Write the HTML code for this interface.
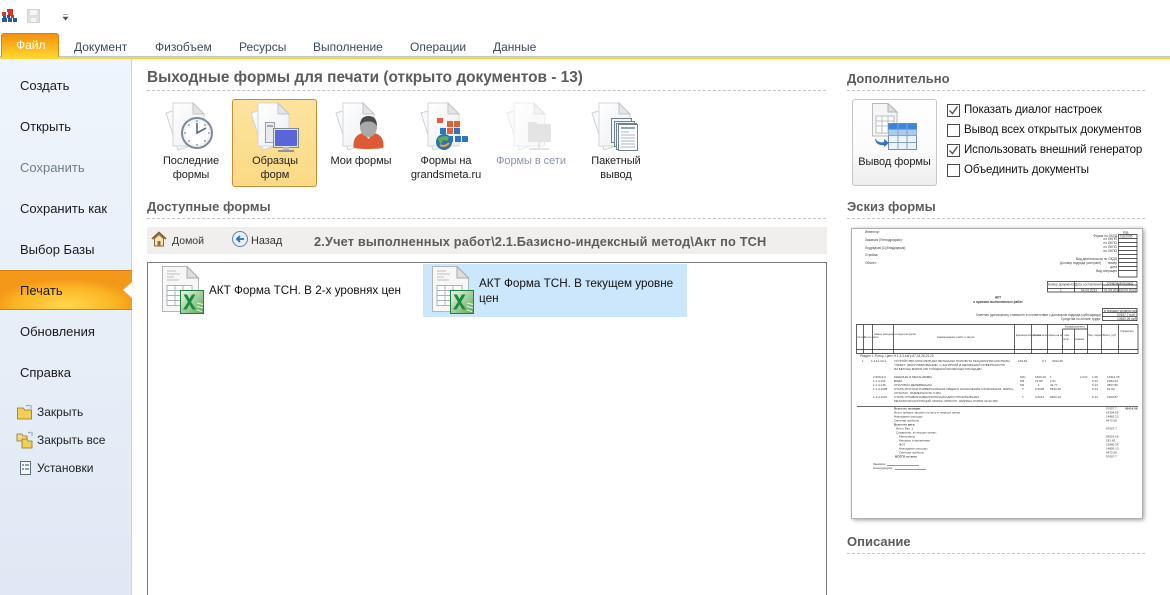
<!DOCTYPE html>
<html lang="ru"><head><meta charset="utf-8"><title>Печать</title>
<style>
html,body{margin:0;padding:0;background:#fff}
#p{position:relative;width:1170px;height:595px;overflow:hidden;background:#fff;font-family:"Liberation Sans","DejaVu Sans",sans-serif;font-size:12px;color:#1e1e1e}
.a,.t{position:absolute;white-space:nowrap}
.tab{top:40px;font-size:12px;color:#3b4a5e}
.nav{left:20px;font-size:13px;color:#1a1a1a}
.sub{left:37px;font-size:12px;color:#222}
.h{font-weight:bold;color:#5c5c5c;font-size:13px}
.dash{position:absolute;height:0;border-top:1px dashed #c4c4c4}
.lbl{position:absolute;text-align:center;font-size:11px;letter-spacing:-.05px;line-height:13.5px;color:#222}
.cb{position:absolute;left:947px;width:11px;height:11px;border:1px solid #4a4a4a;background:#fff}
.cl{left:964px;font-size:11.500px;letter-spacing:-.1px;color:#111}
</style></head><body><div id="p">
<svg width="0" height="0" style="position:absolute"><defs>
<linearGradient id="pg" x1="0" y1="0" x2="1" y2="1"><stop offset="0" stop-color="#fff"/><stop offset="1" stop-color="#eceef2"/></linearGradient>
<linearGradient id="xg" x1="0" y1="0" x2="1" y2="1"><stop offset="0" stop-color="#eef7e8"/><stop offset="1" stop-color="#58a85a"/></linearGradient>
<symbol id="docs" viewBox="0 0 60 60" overflow="visible">
<path d="M4 13 L14 10 L28 46 L16 50Z" fill="#f8f9fa" stroke="#d0d2d6"/>
<path d="M11 3H31L42 14V46H11Z" fill="url(#pg)" stroke="#d4d6da"/>
<path d="M31 3V14H42Z" fill="#e2e4e8" stroke="#c2c4c9"/>
</symbol>
<symbol id="xl" viewBox="0 0 42 50" overflow="visible">
<path d="M.5 .5H25L36.500 12V45.500H.5Z" fill="#f7f7f8" stroke="#b2b5ba"/>
<path d="M25 .5V12H36.500Z" fill="#dcdee2" stroke="#a8abb0"/>
<path d="M5 5h9M5 8h13M5 11h7M5 14h12" stroke="#bcbcbc" stroke-width="1"/>
<path d="M5 19.500H30V39.500H5ZM5 24.500H30M5 29.500H30M5 34.500H30M13 19.500V39.500M21 19.500V39.500" fill="#fff" stroke="#a9b3b5"/>
<rect x="18.500" y="24.500" width="23" height="23" fill="url(#xg)" stroke="#23803a"/>
<path d="M21.500 28.500h3.500l2.500 4.500 2.500-4.500h3.500l-4.500 7.500 5 7.500h-3.500l-3-5-3 5H21l5-7.500Z" fill="#1c8a3a"/>
<path d="M35 37l6 1.500M35 40.500l6 1.500M35 44l5 1.500" stroke="#e8f3e4"/>
</symbol>
</defs></svg>

<!-- quick access -->
<svg class="a" style="left:0;top:6px" width="80" height="20">
<g fill="#d23a2a"><rect x="7" y="3" width="6" height="3"/><rect x="2" y="6" width="4" height="4"/><rect x="8" y="6" width="5" height="4"/><rect x="11" y="9" width="3" height="3"/></g>
<g fill="#2b55a8"><rect x="3" y="10" width="3" height="2"/><rect x="7" y="9" width="3" height="3"/><rect x="2" y="12" width="5" height="4"/><rect x="8" y="12" width="4" height="4"/><rect x="13" y="12" width="4" height="4"/></g>
<rect x="27.500" y="3.500" width="12" height="13" fill="#e0e0e0" stroke="#d2d2d2"/><rect x="30" y="4" width="7" height="5" fill="#f5f5f5"/><rect x="31" y="12" width="5" height="4" fill="#f5f5f5"/>
<path d="M63 8.500h5M63 11h5l-2.500 3Z" fill="#555" stroke="#555" stroke-width=".6"/>
</svg>

<!-- tabs -->
<div class="a" style="left:0;top:56px;width:1170px;height:1px;background:#bcc9d8"></div>
<div class="a" style="left:0;top:57px;width:1170px;height:2px;background:#ffd53a"></div>
<div class="a" style="left:0;top:59px;width:1170px;height:2px;background:linear-gradient(#fff3c0,#fff)"></div>
<div class="a" style="left:1px;top:33px;width:58px;height:24px;background:linear-gradient(#f29010,#fbb61c 55%,#ffd530);border:1px solid #d2870f;border-bottom:0;border-radius:3px 3px 0 0;box-sizing:border-box"></div>
<div class="t" style="left:16px;top:38px;font-size:12px;color:#fff">Файл</div>
<div class="t tab" style="left:74px">Документ</div>
<div class="t tab" style="left:155px">Физобъем</div>
<div class="t tab" style="left:239px">Ресурсы</div>
<div class="t tab" style="left:313px">Выполнение</div>
<div class="t tab" style="left:410px">Операции</div>
<div class="t tab" style="left:493px">Данные</div>

<!-- sidebar -->
<div class="a" style="left:0;top:59px;width:132px;height:536px;background:linear-gradient(#eff5fc,#dfe8f4);border-right:1px solid #ccd4de;box-sizing:border-box"></div>
<div class="t nav" style="top:78px">Создать</div>
<div class="t nav" style="top:119px">Открыть</div>
<div class="t nav" style="top:160px;color:#6f7f7f">Сохранить</div>
<div class="t nav" style="top:201px">Сохранить как</div>
<div class="t nav" style="top:242px">Выбор Базы</div>
<div class="a" style="left:0;top:270px;width:132px;height:40px;background:radial-gradient(ellipse 72px 26px at 66px 34px,#ffd84a,#fbb423 70%,#f4981a);border-top:1px solid #d08016;border-bottom:1px solid #d08016;box-sizing:border-box"></div>
<svg class="a" style="left:123px;top:280px" width="9" height="20"><path d="M9 2L0 10L9 18Z" fill="#fff"/></svg>
<div class="t nav" style="top:283px">Печать</div>
<div class="t nav" style="top:324px">Обновления</div>
<div class="t nav" style="top:365px">Справка</div>
<svg class="a" style="left:16px;top:403px" width="18" height="76">
<g stroke="#8f7420" stroke-width=".8"><path d="M1.500 5h6l1 2h7v9H1.500Z" fill="#f3cf55"/><path d="M10 3l4-1M15 2v4" stroke="#6d8caa" fill="none"/>
<path d="M1 31h5l1 2h4v5H1Z" fill="#f1d98a"/><path d="M6 36h5l1 2h4v7H6Z" fill="#f3cf55"/><path d="M12 30l3-1M16 29v4" stroke="#6d8caa" fill="none"/></g>
<rect x="4.500" y="58.500" width="10" height="13" fill="#f4f6fa" stroke="#5b6b80"/>
<path d="M6 62h2M6 66h2M9 62h4M9 66h4" stroke="#33475e"/>
</svg>
<div class="t sub" style="top:405px">Закрыть</div>
<div class="t sub" style="top:433px">Закрыть все</div>
<div class="t sub" style="top:461px">Установки</div>

<!-- heading -->
<div class="t h" style="left:147px;top:69px;font-size:15.400px">Выходные формы для печати (открыто документов - 13)</div>
<div class="dash" style="left:147px;top:90px;width:679px"></div>

<!-- selected -->
<div class="a" style="left:232px;top:99px;width:85px;height:88px;box-sizing:border-box;border:1px solid #c58d3c;border-radius:3px;background:linear-gradient(#fde3a0,#fbda84)"></div>

<svg class="a" style="left:160px;top:100px" width="66" height="60"><use href="#docs" x="2" y="0" width="60" height="60"/>
<circle cx="37" cy="33" r="15" fill="#f0f3f7" stroke="#7f8a98" stroke-width="2"/><circle cx="37" cy="33" r="11.500" fill="#fff"/>
<path d="M37 23V33L46 28" fill="none" stroke="#5f6b7a" stroke-width="1.600"/>
<g fill="#7f8a98"><circle cx="37" cy="21" r=".9"/><circle cx="37" cy="45" r=".9"/><circle cx="25" cy="33" r=".9"/><circle cx="49" cy="33" r=".9"/><circle cx="29" cy="25" r=".9"/><circle cx="45" cy="41" r=".9"/><circle cx="29" cy="41" r=".9"/><circle cx="45" cy="25" r=".9"/></g></svg>
<div class="lbl" style="left:150px;top:155px;width:82px">Последние<br>формы</div>

<svg class="a" style="left:245px;top:100px" width="66" height="60"><use href="#docs" x="2" y="0" width="60" height="60"/>
<rect x="20.500" y="22.500" width="9" height="20" fill="#e9ebee" stroke="#9aa2ad"/><rect x="22" y="25" width="6" height="2" fill="#9fa7b2"/>
<rect x="28.500" y="28.500" width="25" height="19" fill="#dfe3e8" stroke="#7f8a98"/><rect x="30" y="30" width="22" height="16" fill="#5a65d8"/>
<rect x="38" y="47" width="6" height="3" fill="#b8bdc4"/><rect x="33" y="50" width="16" height="2" fill="#8d939c"/></svg>
<div class="lbl" style="left:234px;top:155px;width:82px">Образцы<br>форм</div>

<svg class="a" style="left:330px;top:100px" width="66" height="60"><use href="#docs" x="2" y="0" width="60" height="60"/>
<path d="M26 48c0-8 2-12 9-14l6 5 6-5c7 2 9 6 9 14 0 1-3 2-15 2s-15-1-15-2Z" fill="#de5a34" transform="translate(-2.500,-1)"/>
<path d="M33.500 33l5 6 5-6Z" fill="#f6e3d8"/>
<ellipse cx="38.500" cy="27" rx="8.500" ry="10" fill="#a9a9a9"/><path d="M30 26c0-8 4-10 8.500-10S47 18 47 26c-3-4-5-4.500-8.500-4.500S32 22 30 26Z" fill="#4a4a4a"/></svg>
<div class="lbl" style="left:320px;top:155px;width:82px">Мои формы</div>

<svg class="a" style="left:415px;top:100px" width="66" height="60"><use href="#docs" x="2" y="0" width="60" height="60"/>
<rect x="22" y="18" width="6" height="5" fill="#e0623a"/><rect x="32" y="21" width="6" height="6" fill="#e0623a"/><rect x="39" y="21" width="6" height="6" fill="#e0623a"/>
<rect x="25" y="28" width="6" height="6" fill="#2f74c0"/><rect x="32" y="28" width="6" height="6" fill="#e0623a"/><rect x="39" y="28" width="6" height="6" fill="#2f74c0"/>
<rect x="32" y="36" width="6" height="6" fill="#2f74c0"/><rect x="40" y="36" width="6" height="6" fill="#2f74c0"/><rect x="47" y="36" width="6" height="6" fill="#2f74c0"/>
<circle cx="29" cy="42" r="8" fill="#2d72b5"/><path d="M23 39c3-3 7-4 11-2l-2 4-4-1-2 5Z" fill="#5fae4b"/><path d="M25 45c3 2 6 1 9-2" stroke="#f0a030" stroke-width="2" fill="none"/></svg>
<div class="lbl" style="left:405px;top:155px;width:82px">Формы на<br>grandsmeta.ru</div>

<svg class="a" style="left:503px;top:100px" width="66" height="60"><g opacity=".45"><use href="#docs" x="0" y="0" width="60" height="60"/>
<path d="M25 22h8l2 2h13v18H25Z" fill="#c4c4c4"/><path d="M36 42v7M26 49h20" stroke="#c4c4c4" stroke-width="2"/></g></svg>
<div class="lbl" style="left:490px;top:155px;width:82px;color:#8b96a6">Формы в сети</div>

<svg class="a" style="left:588px;top:100px" width="66" height="60"><use href="#docs" x="0" y="0" width="60" height="60"/>
<g fill="#f2f4f8" stroke="#6f7f95"><rect x="23.500" y="18.500" width="20" height="24"/><rect x="26.500" y="21.500" width="20" height="25"/><rect x="28.500" y="23.500" width="20" height="26"/><rect x="30.500" y="24.500" width="19" height="26" fill="#fff"/></g>
<path d="M33 28h14" stroke="#90a4bf" stroke-width="2"/><path d="M33 32h8M33 35h14M33 38h14M33 41h14M33 44h14M33 47h14" stroke="#aab4c2"/></svg>
<div class="lbl" style="left:575px;top:155px;width:82px">Пакетный<br>вывод</div>

<!-- available -->
<div class="t h" style="left:147px;top:199px">Доступные формы</div>
<div class="dash" style="left:147px;top:218px;width:679px"></div>
<div class="a" style="left:147px;top:227px;width:680px;height:27px;background:#f0efed"></div>
<svg class="a" style="left:151px;top:231px" width="16" height="16"><path d="M1 8L8 1.500 15 8" fill="none" stroke="#8a5a22" stroke-width="1.600"/><path d="M3.500 7.500V15h9V7.500L8 3.500Z" fill="#f4e3b8" stroke="#7d6a40"/><rect x="6.500" y="10" width="3" height="5" fill="#a8662c"/></svg>
<div class="t" style="left:172px;top:235px;font-size:10.500px;color:#333">Домой</div>
<svg class="a" style="left:232px;top:231px" width="17" height="17"><circle cx="8" cy="8" r="7.500" fill="#e8eff8" stroke="#5f83ad"/><path d="M12 8H5M8 5L5 8l3 3" fill="none" stroke="#2c69c4" stroke-width="1.700"/></svg>
<div class="t" style="left:251px;top:235px;font-size:10.900px;color:#333">Назад</div>
<div class="t h" style="left:314px;top:234px;font-size:12.800px;letter-spacing:.15px">2.Учет выполненных работ\2.1.Базисно-индексный метод\Акт по ТСН</div>

<div class="a" style="left:147px;top:262px;width:680px;height:340px;border:1px solid #7d7d7d;box-sizing:border-box;background:#fff"></div>
<svg class="a" style="left:162px;top:266px" width="42" height="50"><use href="#xl" width="42" height="50"/></svg>
<div class="t" style="left:209px;top:284px;font-size:11.700px;color:#111">АКТ Форма ТСН. В 2-х уровнях цен</div>
<div class="a" style="left:423px;top:264px;width:264px;height:53px;background:#cce6fb"></div>
<svg class="a" style="left:432px;top:266px" width="42" height="50"><use href="#xl" width="42" height="50"/></svg>
<div class="t" style="left:479px;top:276px;font-size:11.700px;line-height:15px;color:#111">АКТ Форма ТСН. В текущем уровне<br>цен</div>

<!-- right -->
<div class="t h" style="left:847px;top:71px">Дополнительно</div>
<div class="dash" style="left:847px;top:90px;width:298px"></div>
<div class="a" style="left:852px;top:99px;width:85px;height:87px;box-sizing:border-box;border:1px solid #c6c6c6;border-radius:3px;background:linear-gradient(#fff,#fbfbfb 60%,#ededed)"></div>
<svg class="a" style="left:870px;top:103px" width="50" height="50">
<path d="M2.500 .5H18L27 9V33H2.500Z" fill="#f5f5f6" stroke="#b9bcc1"/><path d="M18 .5V9H27Z" fill="#dcdee2" stroke="#b0b3b8"/>
<path d="M6 13H24V30H6ZM6 18H24M6 23H24M12 13V30M18 13V30" fill="#fff" stroke="#b9bcc1"/>
<rect x="18.500" y="20.500" width="28" height="26" fill="#eaf2fb" stroke="#7b8ea6"/><rect x="18.500" y="20.500" width="28" height="6" fill="#3f85d6"/><rect x="18.500" y="26.500" width="28" height="6" fill="#a9cbf0"/>
<path d="M28 20V47M37 20V47M18 32.500H46M18 39.500H46" stroke="#8aa3bf" fill="none"/>
<path d="M5 35c2 4 6 5 9 4v-3l5 4-5 4v-2c-5 1-9-2-9-7Z" fill="#3a6fc4"/></svg>
<div class="lbl" style="left:852px;top:155.500px;width:85px">Вывод формы</div>

<div class="cb" style="top:104px"></div><svg class="a" style="left:948px;top:105px" width="12" height="12"><path d="M1.500 5.500l3 3 5-7" fill="none" stroke="#555" stroke-width="1.400"/></svg>
<div class="t cl" style="top:104px">Показать диалог настроек</div>
<div class="cb" style="top:124px"></div>
<div class="t cl" style="top:124px">Вывод всех открытых документов</div>
<div class="cb" style="top:144px"></div><svg class="a" style="left:948px;top:145px" width="12" height="12"><path d="M1.500 5.500l3 3 5-7" fill="none" stroke="#555" stroke-width="1.400"/></svg>
<div class="t cl" style="top:144px">Использовать внешний генератор</div>
<div class="cb" style="top:164px"></div>
<div class="t cl" style="top:164px">Объединить документы</div>

<div class="t h" style="left:847px;top:199px">Эскиз формы</div>
<div class="dash" style="left:847px;top:218px;width:298px"></div>

<svg class="a" style="left:845px;top:220px" width="310" height="310" font-family="Liberation Sans,sans-serif" font-size="3.200" fill="#3a3a3a">
<defs><filter id="bl" x="-5%" y="-5%" width="110%" height="110%"><feGaussianBlur stdDeviation=".3"/></filter><filter id="sh" x="-5%" y="-5%" width="110%" height="110%"><feGaussianBlur stdDeviation="2"/></filter></defs>
<rect x="8" y="9" width="291" height="291" fill="#999" filter="url(#sh)"/>
<rect x="6.500" y="8.500" width="291" height="290" fill="#fff" stroke="#b0b0b0"/>
<g filter="url(#bl)">
<text x="20" y="13">Инвестор:</text><text x="20" y="21">Заказчик (Генподрядчик):</text><text x="20" y="29">Подрядчик (Субподрядчик):</text><text x="20" y="36">Стройка:</text><text x="20" y="44">Объект:</text>
<g text-anchor="end"><text x="272" y="17">Форма по ОКУД</text><text x="272" y="20">по ОКПО</text><text x="272" y="24">по ОКПО</text><text x="272" y="28">по ОКПО</text><text x="272" y="32">по ОКПО</text><text x="272" y="40">Вид деятельности по ОКДП</text><text x="272" y="44">номер</text><text x="272" y="48">дата</text><text x="272" y="52">Вид операции</text></g>
<text x="215" y="44">Договор подряда (контракт)</text>
<text x="278" y="13.500">Код</text><text x="275" y="17.500">0322005</text>
<path d="M273.500 14.500H292V57H273.500ZM273.500 18.500H292M273.500 22.500H292M273.500 26.500H292M273.500 30.500H292M273.500 34.500H292M273.500 38.500H292M273.500 42.500H292M273.500 46.500H292M273.500 50.500H292" fill="none" stroke="#222" stroke-width=".7"/>
<path d="M202.500 61.500H292V72H202.500ZM202.500 68.500H292M229.500 61.500V72M257.500 61.500V72M273.500 65V72M257.500 65H292" fill="none" stroke="#222" stroke-width=".7"/>
<text x="203" y="65.500">Номер документа</text><text x="230" y="65.500">Дата составления</text><text x="262" y="64.500">Отчетный период</text><text x="215" y="71.500">1</text><text x="236" y="71.500">04.09.2013</text><text x="259" y="71.500">01.09.2013</text><text x="275" y="71.500">30.09.2013</text>
<text x="153" y="78.500" font-weight="bold" text-anchor="middle">АКТ</text><text x="153" y="83" font-weight="bold" text-anchor="middle">о приемке выполненных работ</text>
<text x="131" y="96">Сметная (договорная) стоимость в соответствии с договором подряда (субподряда)</text><text x="255" y="100" text-anchor="end">Средства по оплате труда</text>
<path d="M257.500 88.500H292V100.500H257.500ZM257.500 92.500H292M257.500 96.500H292" fill="none" stroke="#222" stroke-width=".7"/>
<text x="259" y="91.800">в текущих уровнях цен</text><text x="272" y="95.800">97657,7 руб</text><text x="272" y="99.800">10580,26 руб</text>
<path d="M11.500 104.500H293V133.500H11.500ZM11.500 129.500H293M18.500 104.500V133.500M27.500 104.500V133.500M48.500 104.500V133.500M169.500 104.500V133.500M186.500 104.500V133.500M202.500 104.500V133.500M217.500 109V133.500M229.500 109V133.500M242.500 104.500V133.500M256.500 104.500V133.500M273.500 104.500V133.500M217.500 109H242.500" fill="none" stroke="#222" stroke-width=".7"/>
<g font-size="2.700"><text x="92" y="118">Наименование работ и затрат</text><text x="12.500" y="118">№ п/п</text><text x="19" y="118">№ по смете</text><text x="29" y="115">Номер расценки и коды ресурсов</text><text x="171" y="116">Единица измерения</text><text x="188" y="116">Кол-во всего</text><text x="204" y="116">Цена на ед. изм.</text><text x="220" y="107.500">Коэффициенты</text><text x="218" y="120">попр.</text><text x="230" y="120">зимнее</text><text x="243" y="116">Пер. индекс</text><text x="258" y="116">Всего, руб</text><text x="275" y="112">Справочно</text></g>
<text x="15" y="137">Раздел 1. Ротор, Цент Н 1,4,3,4аГу 67,44,26,24,20</text>
<g font-size="3"><text x="17" y="142">1</text><text x="26" y="142">1.2.11-10-1</text><text x="49" y="142">УСТРОЙСТВО МОНОЛИТНЫХ БЕТОННЫХ ПОЛОВ ПО ТЕХНОЛОГИИ СИСТЕМЫ</text><text x="49" y="146">"TRIMIX" (ВАКУУМИРОВАНИЕ), С ЗАТИРКОЙ И ЩЕЛЯЖНОЙ ПОВЕРХНОСТЮ</text><text x="49" y="150">ИЗ БЕТОНА МАРКИ 200 ТОЛЩИНОЙ 80 МЕХАДО ПЛОЩАДЮ</text>
<text x="173" y="142">169.62</text><text x="197" y="142">0.7</text><text x="207" y="142">3094.25</text>
<text x="28" y="158">2.999-9-9</text><text x="49" y="158">МАШИНЫ И МЕХАНИЗМЫ</text><text x="175" y="158">М/Ч</text><text x="190" y="158">1600.43</text><text x="205" y="158">1</text><text x="235" y="158">1.047</text><text x="247" y="158">1.05</text><text x="262" y="158">14914.25</text>
<text x="28" y="162">1.1.4-116</text><text x="49" y="162">ВОДА</text><text x="175" y="162">М3</text><text x="190" y="162">71.89</text><text x="205" y="162">1.01</text><text x="247" y="162">6.14</text><text x="262" y="162">1084.24</text>
<text x="28" y="166">1.1.4-136</text><text x="49" y="166">ОПАЛУБКА ДЕРЕВЯННАЯ</text><text x="175" y="166">М3</text><text x="193" y="166">1</text><text x="205" y="166">42.77</text><text x="247" y="166">6.14</text><text x="262" y="166">2867.80</text>
<text x="28" y="170">1.1.4-1085</text><text x="49" y="170">СТАЛЬ КРУГЛАЯ УНИВЕРСАЛЬНАЯ ОБЩЕГО НАЗНАЧЕНИЯ ОТОЖЖЕНАЯ, МАРКА,</text><text x="49" y="174">СП3СП4С, РАЗМЕРНОСТЬ 6 ММ</text><text x="177" y="170">Т</text><text x="190" y="170">0.0028</text><text x="205" y="170">5543.49</text><text x="247" y="170">6.14</text><text x="262" y="170">91.93</text>
<text x="28" y="178">1.1.4-1119</text><text x="49" y="178">СТАЛЬ УГЛОВАЯ РАВНОПОЛОЧНАЯ ДЛЯ СТРОИТЕЛЬНЫХ</text><text x="49" y="182">МЕТАЛЛОКОНСТРУКЦИЙ, МАРКА: 08ПС/СП, ШИРИНА ПОЛКИ 20-32 ММ</text><text x="177" y="178">Т</text><text x="190" y="178">0.0213</text><text x="205" y="178">6603.14</text><text x="247" y="178">6.14</text><text x="262" y="178">1900.87</text>
</g>
<path d="M12 186.500H293" stroke="#333" stroke-width=".7"/>
<g font-size="3"><text x="49" y="189.500" font-weight="bold">Всего по позиции</text><text x="49" y="193.500">Итого прямые затраты по акту в текущих ценах</text><text x="49" y="197.500">Накладные расходы</text><text x="49" y="201.500">Сметная прибыль</text><text x="49" y="205.500" font-weight="bold">Всего по акту:</text><text x="51" y="209.500">Итого Раз. 1</text><text x="51" y="213.500">Справочно, в текущих ценах:</text><text x="54" y="217.500">Материалы</text><text x="54" y="221.500">Машины и механизмы</text><text x="54" y="225.500">ФОТ</text><text x="54" y="229.500">Накладные расходы</text><text x="54" y="233.500">Сметная прибыль</text><text x="50" y="237.500" font-weight="bold">ВСЕГО по акту</text>
<text x="261" y="189.500">97657.7</text><text x="280" y="189.500" font-weight="bold">45414.06</text><text x="261" y="193.500">63304.55</text><text x="261" y="197.500">14881.13</text><text x="261" y="201.500">9472.08</text><text x="261" y="209.500">97657.7</text><text x="261" y="217.500">59216.66</text><text x="261" y="221.500">181.63</text><text x="261" y="225.500">15980.26</text><text x="261" y="229.500">14895.13</text><text x="261" y="233.500">9472.08</text><text x="261" y="237.500">97657.7</text>
<text x="28" y="245">Заказчик</text><text x="28" y="249">Генподрядчик</text></g>
<path d="M42 245.500H74M50 249.500H81" stroke="#333" stroke-width=".6"/>
</g></svg>

<div class="t h" style="left:847px;top:534px">Описание</div>
<div class="dash" style="left:847px;top:553px;width:298px"></div>
</div></body></html>
